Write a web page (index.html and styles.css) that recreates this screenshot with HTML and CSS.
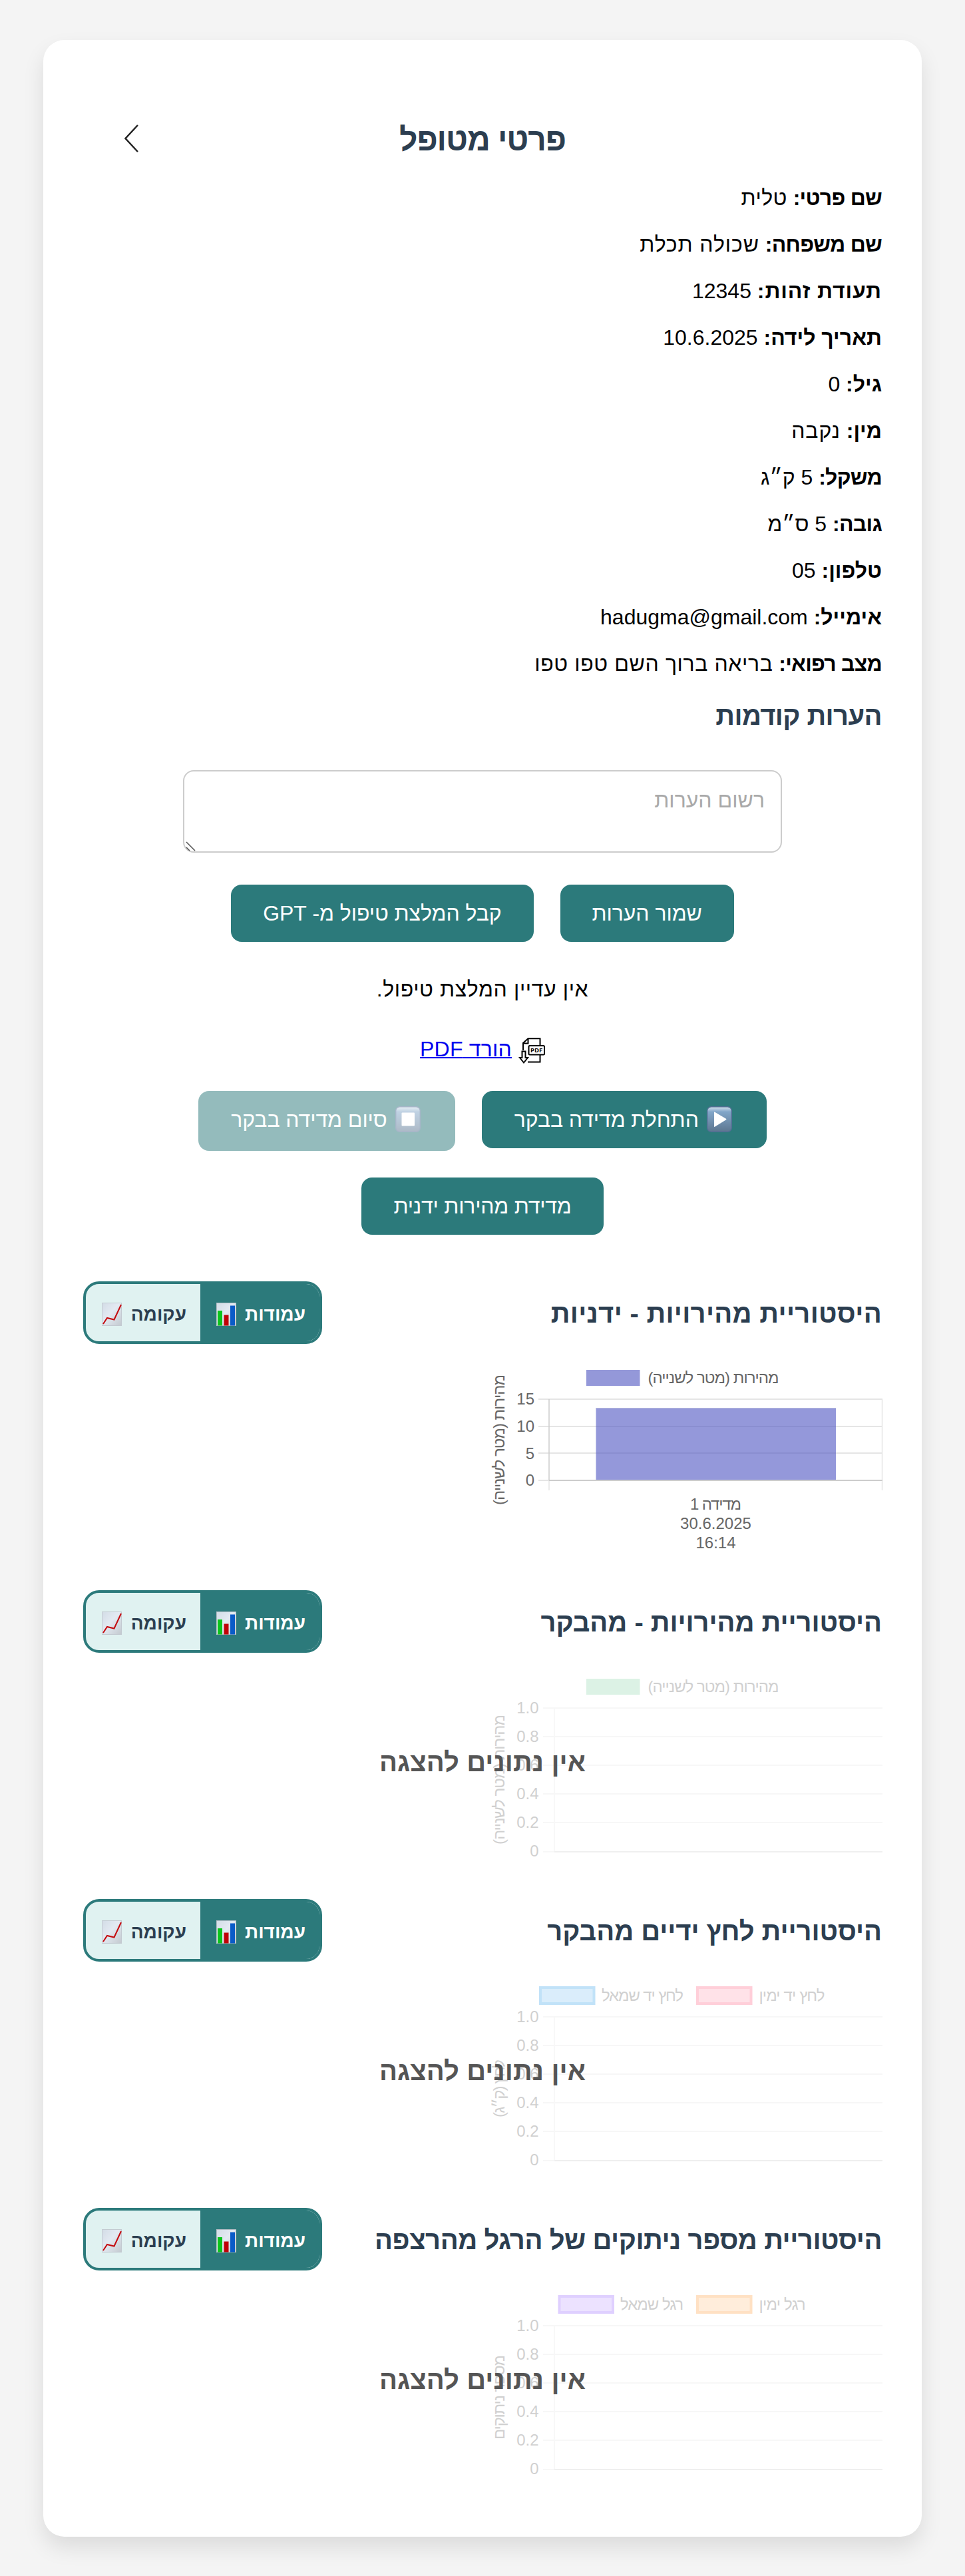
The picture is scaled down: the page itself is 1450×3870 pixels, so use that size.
FILE: index.html
```html
<!DOCTYPE html>
<html lang="he" dir="rtl">
<head>
<meta charset="utf-8">
<title>פרטי מטופל</title>
<link rel="stylesheet" href="styles.css">
</head>
<body>
<svg class="defs" width="0" height="0">
  <defs>
    <linearGradient id="key" x1="0" y1="0" x2="0" y2="1"><stop offset="0" stop-color="#d5e2ec"/><stop offset=".2" stop-color="#82a6c9"/><stop offset="1" stop-color="#5d7690"/></linearGradient>
    <linearGradient id="paper" x1="0" y1="0" x2="1" y2="1"><stop offset="0" stop-color="#d3dce6"/><stop offset=".45" stop-color="#e3eaf2"/><stop offset="1" stop-color="#c3c9cf"/></linearGradient>
    <symbol id="bars" viewBox="0 0 30 35"><rect x=".5" y=".5" width="29" height="34" fill="url(#paper)" stroke="#b4bcc4"/><rect x="2" y="12" width="7" height="22.500" fill="#0cc41c"/><rect x="11.500" y="18.500" width="7" height="16" fill="#c00207"/><rect x="21" y="4.500" width="7" height="30" fill="#0a5bc8"/></symbol>
    <symbol id="line" viewBox="0 0 30 35"><rect x=".5" y=".5" width="29" height="34" fill="url(#paper)" stroke="#c3cad1"/><path d="M2 32L8 23L18.500 25.500L29 3" fill="none" stroke="#c40a0e" stroke-width="2"/></symbol>
    <g id="empty-grid">
      <path class="grid" d="M91 59H601M91 102H601M91 145H601M91 188H601M91 231H601M91 275H108"/>
      <path class="grid thin" d="M108 60V275"/>
      <path class="axis faint" d="M108 275H601"/>
      <g class="tick"><text x="84.500" y="67">1.0</text><text x="84.500" y="110">0.8</text><text x="84.500" y="153">0.6</text><text x="84.500" y="196">0.4</text><text x="84.500" y="239">0.2</text><text x="84.500" y="282">0</text></g>
    </g>
  </defs>
</svg>
<main class="card">
  <header class="head">
    <span></span>
    <h1 class="title">פרטי מטופל</h1>
    <svg class="back" width="24" height="44" viewBox="0 0 24 44"><path d="M22 2L3.500 22L22 42" fill="none" stroke="#222" stroke-width="2.500"/></svg>
  </header>

  <div class="details">
    <p><b>שם פרטי:</b> <span class="val">טלית</span></p>
    <p><b>שם משפחה:</b> <span class="val loose">שכולה תכלת</span></p>
    <p><b class="wider">תעודת זהות:</b> 12345</p>
    <p><b class="wide">תאריך לידה:</b> 10.6.2025</p>
    <p><b class="wide">גיל:</b> 0</p>
    <p><b class="wide">מין:</b> <span class="val loose">נקבה</span></p>
    <p><b>משקל:</b> 5 ק״ג</p>
    <p><b>גובה:</b> 5 ס״מ</p>
    <p><b class="wide">טלפון:</b> 05</p>
    <p><b class="wide">אימייל:</b> hadugma@gmail.com</p>
    <p><b>מצב רפואי:</b> <span class="val last">בריאה ברוך השם טפו טפו</span></p>
  </div>

  <h2 class="notes-title">הערות קודמות</h2>
  <div class="notes">
    <textarea placeholder="רשום הערות"></textarea>
    <svg class="grip" width="16" height="16" viewBox="0 0 16 16"><path d="M1 1L14 14M1 9L6 14" stroke="#555" stroke-width="1.500"/></svg>
  </div>

  <div class="row row-notes">
    <button class="btn">שמור הערות</button>
    <button class="btn">קבל המלצת טיפול מ- GPT</button>
  </div>
  <p class="advice">אין עדיין המלצת טיפול.</p>
  <div class="pdf">
    <svg width="40" height="40" viewBox="0 0 40 40" fill="none" stroke="#000" stroke-width="2">
      <path d="M7 19V8L14.500 1.200H32.500V36.500H14M14.500 1.500V8.500H7"/>
      <rect x="15.500" y="12" width="23.500" height="13.500" rx="1.500" fill="#fff"/>
      <path d="M5.500 20.500H10.500V30H14L8 37.500L2 30H5.500Z" fill="#fff" stroke-width="2"/>
      <text class="pdf-tag" x="27.200" y="22.300">PDF</text>
    </svg>
    <a href="#">הורד PDF</a>
  </div>
  <div class="row row-walker">
    <button class="btn btn-icon"><svg width="38" height="39" viewBox="0 0 38 39"><rect x=".7" y=".7" width="36.600" height="37.600" rx="6" fill="url(#key)" stroke="#526f94" stroke-width="1.400"/><path d="M11 9.500Q11 8 12.500 9L29 18.700Q30 19.500 29 20.300L12.500 30.500Q11 31.500 11 30Z" fill="#fff"/></svg>התחלת מדידה בבקר</button>
    <button class="btn btn-icon btn-off" disabled><svg width="38" height="39" viewBox="0 0 38 39"><rect x=".7" y=".7" width="36.600" height="37.600" rx="6" fill="url(#key)" stroke="#526f94" stroke-width="1.400"/><rect x="9.500" y="9.500" width="19.500" height="20" rx="1" fill="#fff"/></svg>סיום מדידה בבקר</button>
  </div>
  <div class="row row-manual">
    <button class="btn">מדידת מהירות ידנית</button>
  </div>

  <section class="history">
    <div class="bar">
      <h2 class="loose">היסטוריית מהירויות - ידניות</h2>
      <div class="toggle"><span class="on">עמודות<svg width="30" height="35"><use href="#bars"/></svg></span><span class="off">עקומה<svg width="30" height="35"><use href="#line"/></svg></span></div>
    </div>
    <div class="chart">
      <svg width="600" height="280" viewBox="0 0 600 280">
        <rect x="156" y="15" width="80.500" height="24" fill="#9498d9"/>
        <text class="lbl" x="347" y="35" textLength="197">מהירות (מטר לשנייה)</text>
        <path class="grid" d="M84 59H601M84 100H601M84 140H601M84 181H100"/>
        <path class="grid thin" d="M100 181V196M600.500 59V196"/>
        <path class="axis" d="M100 181H601"/><path class="axis thin" d="M100 59V181"/>
        <rect x="170.500" y="72" width="360.500" height="108" fill="rgba(77,84,194,.6)"/>
        <path d="M170.500 72.500H531" stroke="#b5b8dd" stroke-width="1"/>
        <g class="tick"><text x="78" y="67">15</text><text x="78" y="108">10</text><text x="78" y="149">5</text><text x="78" y="189">0</text></g>
        <g class="lbl"><text x="350.500" y="225" textLength="77">מדידה 1</text><text x="350.500" y="254">30.6.2025</text><text x="350.500" y="283">16:14</text></g>
        <text class="lbl" transform="translate(33 120) rotate(-90)" textLength="196">מהירות (מטר לשנייה)</text>
      </svg>
    </div>
  </section>

  <section class="history">
    <div class="bar">
      <h2 class="snug">היסטוריית מהירויות - מהבקר</h2>
      <div class="toggle"><span class="on">עמודות<svg width="30" height="35"><use href="#bars"/></svg></span><span class="off">עקומה<svg width="30" height="35"><use href="#line"/></svg></span></div>
    </div>
    <div class="chart">
      <svg class="dim" width="600" height="280" viewBox="0 0 600 280">
        <rect x="156" y="15" width="80.500" height="24" fill="#8ed7ac"/>
        <text class="lbl" x="347" y="35" textLength="197">מהירות (מטר לשנייה)</text>
        <use href="#empty-grid"/>
        <text class="lbl" transform="translate(33 166.500) rotate(-90)" textLength="195">מהירות (מטר לשנייה)</text>
      </svg>
      <div class="none">אין נתונים להצגה</div>
    </div>
  </section>

  <section class="history">
    <div class="bar">
      <h2 class="snug">היסטוריית לחץ ידיים מהבקר</h2>
      <div class="toggle"><span class="on">עמודות<svg width="30" height="35"><use href="#bars"/></svg></span><span class="off">עקומה<svg width="30" height="35"><use href="#line"/></svg></span></div>
    </div>
    <div class="chart">
      <svg class="dim" width="600" height="280" viewBox="0 0 600 280">
        <rect x="323" y="15" width="80.500" height="24" fill="#ffa1b5" stroke="#ff6384" stroke-width="4"/>
        <text class="lbl" x="465" y="35" textLength="99">לחץ יד ימין</text>
        <rect x="87" y="15" width="80.500" height="24" fill="#86c7f3" stroke="#36a2eb" stroke-width="4"/>
        <text class="lbl" x="240.500" y="35" textLength="123">לחץ יד שמאל</text>
        <use href="#empty-grid"/>
        <text class="lbl" transform="translate(33 166.500) rotate(-90)" textLength="87">לחץ (ק״ג)</text>
      </svg>
      <div class="none">אין נתונים להצגה</div>
    </div>
  </section>

  <section class="history">
    <div class="bar">
      <h2 class="long">היסטוריית מספר ניתוקים של הרגל מהרצפה</h2>
      <div class="toggle"><span class="on">עמודות<svg width="30" height="35"><use href="#bars"/></svg></span><span class="off">עקומה<svg width="30" height="35"><use href="#line"/></svg></span></div>
    </div>
    <div class="chart">
      <svg class="dim" width="600" height="280" viewBox="0 0 600 280">
        <rect x="323" y="15" width="80.500" height="24" fill="#ffc58c" stroke="#ff9f40" stroke-width="4"/>
        <text class="lbl" x="450.500" y="35" textLength="70">רגל ימין</text>
        <rect x="115.500" y="15" width="80.500" height="24" fill="#c2a3ff" stroke="#9966ff" stroke-width="4"/>
        <text class="lbl" x="254.500" y="35" textLength="95">רגל שמאל</text>
        <use href="#empty-grid"/>
        <text class="lbl" transform="translate(33 166.500) rotate(-90)" textLength="127">מספר ניתוקים</text>
      </svg>
      <div class="none">אין נתונים להצגה</div>
    </div>
  </section>
</main>
</body>
</html>
```
FILE: styles.css
```css
* { box-sizing: border-box; }
body {
  margin: 0;
  padding: 60px 65px 59px;
  background: #f4f4f4;
  font: 32px/38px "Liberation Sans", Arial, sans-serif;
  color: #000;
}
h1, h2, p { margin: 0; }
svg { display: block; }
.defs { position: absolute; }

.card {
  padding: 122px 60px 96px;
  border-radius: 32px;
  background: #fff;
  box-shadow: 0 16px 32px rgba(0, 0, 0, .1);
}

.head { display: grid; grid-template-columns: 1fr auto 1fr; align-items: center; height: 56px; }
.title { font-size: 48px; line-height: 56px; letter-spacing: -1.1px; color: #2c3e50; }
.back { justify-self: end; margin: 0 0 4px 60px; }

.details { display: flex; flex-direction: column; gap: 32px; margin-top: 40px; }
.details b { letter-spacing: -.75px; }
.details .wide { letter-spacing: 0; }
.details .wider { letter-spacing: .9px; }
.details .val { letter-spacing: .4px; }
.details .loose { letter-spacing: .9px; }
.details .last { letter-spacing: .6px; }

.notes-title { margin-top: 36px; font-size: 40px; line-height: 46px; letter-spacing: -.6px; color: #2c3e50; }
.notes { position: relative; width: 900px; height: 124px; margin: 59px auto 0; }
.notes textarea {
  display: block;
  width: 100%;
  height: 100%;
  padding: 24px;
  border: 2px solid #ccc;
  border-radius: 16px;
  font: inherit;
  resize: none;
  overflow: hidden;
}
.notes textarea::placeholder { color: #a9a9a9; }
.grip { position: absolute; left: 4px; bottom: 1px; }

.row { display: flex; justify-content: center; align-items: flex-start; gap: 40px; }
.row-notes { margin-top: 48px; }
.row-walker, .row-manual { margin-top: 40px; }
.btn {
  height: 86px;
  padding: 0 48px;
  border: 0;
  border-radius: 16px;
  background: #2c7a7b;
  color: #fff;
  font: inherit;
  letter-spacing: -.08px;
  white-space: nowrap;
}
.row-manual .btn { letter-spacing: -.22px; }
.btn-icon { display: flex; align-items: flex-start; gap: 12px; padding: 24px 52px 0 49px; }
.btn-icon svg { margin-top: -1px; }
.btn-off { height: 90px; opacity: .5; }

.advice { margin-top: 52px; text-align: center; letter-spacing: .6px; }
.pdf { display: flex; justify-content: center; align-items: flex-start; gap: 10px; height: 40px; margin-top: 54px; }
.pdf a { margin-top: -2px; color: #00e; letter-spacing: .2px; text-decoration-thickness: 2px; }
.pdf-tag { direction: ltr; font: bold 9.500px "Open Sans", sans-serif; text-anchor: middle; fill: #000; stroke: none; }

.history { margin-bottom: 66px; }
.row-manual + .history { margin-top: 70px; }
.history:last-child { margin-bottom: 0; }
.bar { display: flex; justify-content: space-between; align-items: center; height: 94px; }
.bar h2 { padding-top: 1px; font-size: 40px; line-height: 46px; color: #2c3e50; }
.bar .loose { letter-spacing: .3px; }
.bar .snug { letter-spacing: -.05px; }
.bar .long { letter-spacing: -.45px; }

.toggle {
  display: flex;
  width: 359px;
  height: 94px;
  border: 4px solid #2c7a7b;
  border-radius: 24px;
  background: #e0f2f1;
  overflow: hidden;
  font: bold 28px/32px "Liberation Sans", Arial, sans-serif;
  color: #2c3e50;
}
.toggle span { display: flex; justify-content: space-between; align-items: center; padding: 5px 21px 0 24px; }
.toggle .on { width: 179px; background: #2c7a7b; color: #fff; }
.toggle .off { width: 172px; }

.chart { position: relative; margin-top: 24px; }
.chart svg { overflow: visible; }
.dim { opacity: .3; }
.none {
  position: absolute;
  inset: 0;
  display: flex;
  justify-content: center;
  align-items: center;
  font-size: 40px;
  font-weight: bold;
  letter-spacing: .1px;
  color: #555;
}
.lbl { direction: rtl; font-size: 24px; fill: #666; text-anchor: middle; }
.tick { direction: ltr; font-size: 24px; fill: #666; text-anchor: end; }
.grid { fill: none; stroke: #e5e5e5; stroke-width: 2; }
.axis { fill: none; stroke: #ccc; stroke-width: 2; }
.grid.thin, .axis.thin { stroke-width: 1.500px; }
```
